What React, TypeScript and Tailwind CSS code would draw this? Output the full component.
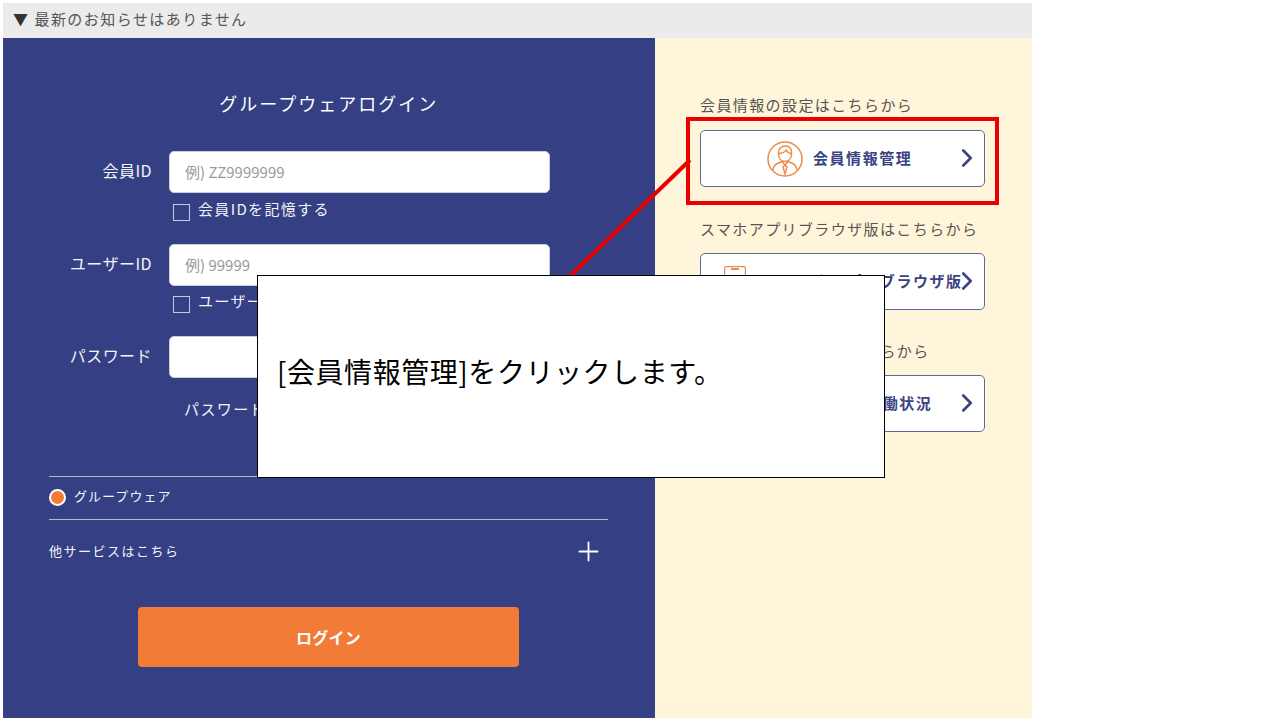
import type { ReactNode } from 'react';
import { ChevronRight, Plus } from 'lucide-react';

const FONT = 'font-["Noto_Sans_CJK_JP","Noto_Sans",sans-serif]';

const FieldRow = ({ label, placeholder }: { label: string; placeholder: string }) => (
  <div className="flex h-[42px] items-center">
    <span className="mb-[5px] w-[149px] text-right text-[16px] leading-[20px] tracking-[0.45px] text-[#f2f3f8]">{label}</span>
    <div className="ml-[17px] flex h-[42px] w-[380.5px] items-center rounded-[5px] border border-[#c9cde0] bg-white pl-[15px] text-[15px] text-[#9a9a9a]">
      {placeholder}
    </div>
  </div>
);

const RememberRow = ({ label }: { label: string }) => (
  <div className="ml-[170px] flex h-[18px] items-center">
    <span className="h-[17px] w-[17px] border border-[#c4c8dc]" />
    <span className="ml-[8px] mb-[6px] text-[15px] leading-[20px] tracking-[1.35px] text-[#f2f3f8]">{label}</span>
  </div>
);

const PersonIcon = () => (
  <svg width="36" height="36" viewBox="0 0 36 36" fill="none" stroke="#ef8a4f" strokeWidth="1.5">
    <circle cx="18" cy="18" r="17" />
    <path d="M11.500 12.500c-.5-4.500 3-7.500 7-7.500s6.500 3 6 7.500c-2-.2-4.500-1.500-5.500-3.500-1 2-4.500 3.300-7.500 3.500z" />
    <path d="M11.500 12.500c0 5 2.800 8 6.500 8s6.500-3 6.500-8" />
    <path d="M6 29c.5-4 2.200-6 5.500-7l3.500-1.500 3 3.500 3-3.500 3.500 1.500c3.300 1 5 3 5.500 7" />
    <path d="M18 24l-2 2 2 7 2-7z" />
  </svg>
);

const PhoneIcon = () => (
  <svg width="22" height="32" viewBox="0 0 22 32" fill="none" stroke="#ef8a4f" strokeWidth="1.2">
    <rect x="0.600" y="0.600" width="20.800" height="30.800" rx="1.500" />
    <path d="M7 3h8" strokeWidth="2" />
  </svg>
);

const LinkButton = ({ icon, label }: { icon: ReactNode; label: string }) => (
  <div className="flex h-[57px] w-[285px] items-center rounded-[5px] border-[1.5px] border-[#5f6899] bg-white">
    {icon}
    <span className="text-[15px] font-bold tracking-[1.55px] text-[#3a4482]">{label}</span>
  </div>
);

const Chevron = () => (
  <ChevronRight size={30} strokeWidth={2.1} className="absolute right-[3px] top-[13px] text-[#3a4482]" />
);

export default function App() {
  return (
    <div className={`relative h-[720px] w-[1280px] overflow-hidden bg-white pl-[3px] pt-[3px] ${FONT}`}>
      <div className="flex h-[715px] w-[1029px] flex-col">
        <div className="flex h-[35px] items-center bg-[#ebebeb] pb-[2px] pl-[10px] text-[15px] tracking-[1.45px] text-[#555555]">
          <span className="mr-[5px] text-[#333333]">▼</span>最新のお知らせはありません
        </div>
        <div className="flex flex-1">
          <div className="w-[651.5px] bg-[#343f84] pt-[51px]">
            <div className="mb-[34px] h-[28px] text-center text-[18px] leading-[28px] tracking-[2px] text-white">
              グループウェアログイン
            </div>
            <FieldRow label="会員ID" placeholder="例) ZZ9999999" />
            <div className="mt-[10px]">
              <RememberRow label="会員IDを記憶する" />
            </div>
            <div className="mt-[23px]">
              <FieldRow label="ユーザーID" placeholder="例) 99999" />
            </div>
            <div className="mt-[9px]">
              <RememberRow label="ユーザーIDを記憶する" />
            </div>
            <div className="mt-[23px]">
              <FieldRow label="パスワード" placeholder="" />
            </div>
            <div className="ml-[181px] mt-[20px] h-[22px] text-[15px] leading-[22px] tracking-[1.4px] text-[#f2f3f8]">
              パスワードを忘れた方はこちら
            </div>
            <div className="ml-[46px] mt-[56px] w-[559px]">
              <div className="flex h-[43px] items-center border-t border-[#b5b9d2]">
                <span className="mb-[1px] box-border h-[17px] w-[17px] rounded-full border-2 border-white bg-[#f37c37]" />
                <span className="mb-[4px] ml-[8px] text-[13px] leading-[18px] tracking-[1.05px] text-[#f2f3f8]">グループウェア</span>
              </div>
              <div className="flex h-[64px] items-center justify-between border-t border-[#b5b9d2]">
                <span className="mb-[2px] text-[13px] leading-[18px] tracking-[1.5px] text-[#f2f3f8]">他サービスはこちら</span>
                <Plus size={31} strokeWidth={1.4} className="mr-[4px] shrink-0 text-white" />
              </div>
            </div>
            <div className="ml-[135px] mt-[24px] flex h-[60px] w-[381px] items-center justify-center rounded-[4px] bg-[#f27b37] text-[16px] font-bold tracking-[0.3px] text-white">
              ログイン
            </div>
          </div>
          <div className="flex-1 bg-[#fff5da] pl-[45.500px] pt-[56px]">
            <div className="h-[22px] text-[15px] leading-[22px] tracking-[1.4px] text-[#555555]">会員情報の設定はこちらから</div>
            <div className="relative mt-[14px] h-[57px] w-[285px]">
              <LinkButton icon={<span className="ml-[66px] mr-[10px]"><PersonIcon /></span>} label="会員情報管理" />
              <Chevron />
            </div>
            <div className="mt-[31px] h-[22px] text-[15px] leading-[22px] tracking-[1.4px] text-[#555555]">スマホアプリブラウザ版はこちらから</div>
            <div className="relative mt-[13px] h-[57px] w-[285px]">
              <LinkButton icon={<span className="ml-[23px] mr-[35px]"><PhoneIcon /></span>} label="スマホアプリブラウザ版" />
              <Chevron />
            </div>
            <div className="mt-[30px] h-[22px] text-[15px] leading-[22px] tracking-[1.4px] text-[#555555]">サービス稼働状況はこちらから</div>
            <div className="relative mt-[13px] h-[57px] w-[285px]">
              <LinkButton icon={<span className="ml-[99px]" />} label="サービス稼働状況" />
              <Chevron />
            </div>
          </div>
        </div>
      </div>

      {/* annotation layer */}
      <svg className="absolute left-0 top-0" width="1280" height="720" fill="none">
        <path d="M690 160L570 276" stroke="#eb0000" strokeWidth="4" />
      </svg>
      <div className="absolute left-[686px] top-[117px] h-[88px] w-[313px] border-4 border-[#eb0000]" />
      <div className="absolute left-[257px] top-[275px] flex h-[203px] w-[628px] items-center border border-black bg-white pb-[12px] pl-[19px] text-[28px] tracking-[0.55px] text-black">
        [会員情報管理]をクリックします。
      </div>
    </div>
  );
}
